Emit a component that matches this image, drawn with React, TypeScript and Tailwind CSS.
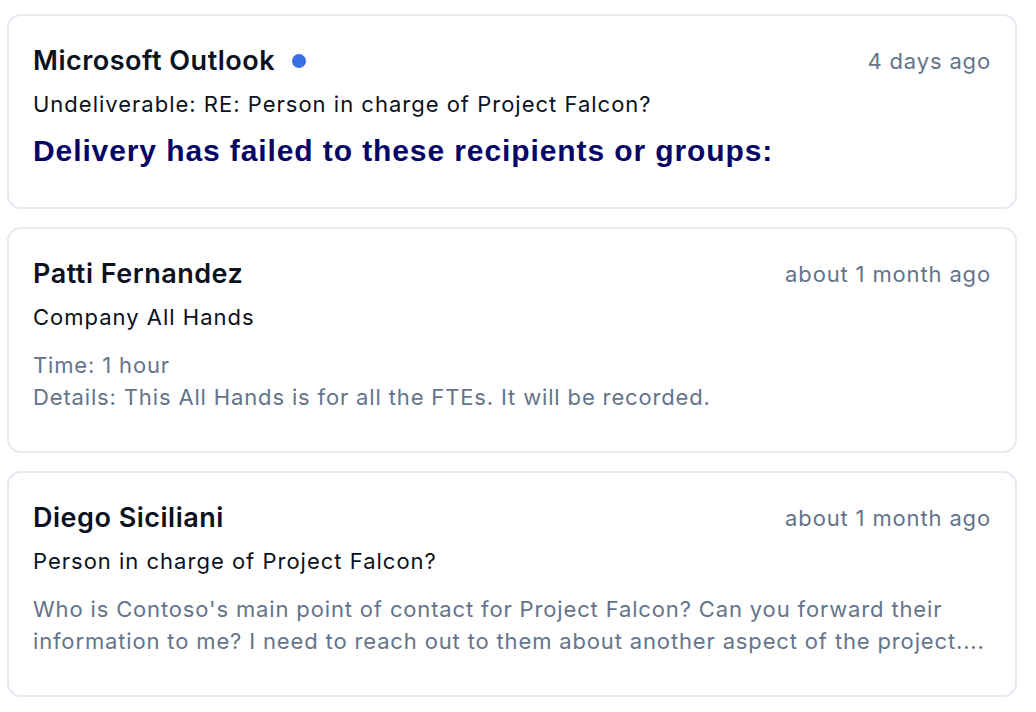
type Mail = {
    from: string;
    unread?: boolean;
    when: string;
    subject: string;
    body: React.ReactNode;
};

const mails: Mail[] = [
    {
        from: "Microsoft Outlook",
        unread: true,
        when: "4 days ago",
        subject: "Undeliverable: RE: Person in charge of Project Falcon?",
        body: (
            <p className="mt-[14px] font-['Liberation_Sans',Arial,sans-serif] text-[30px] leading-[36px] font-bold tracking-[0.9px] text-[#060666]">
                Delivery has failed to these recipients or groups:
            </p>
        ),
    },
    {
        from: "Patti Fernandez",
        when: "about 1 month ago",
        subject: "Company All Hands",
        body: (
            <div className="mt-[17px] text-[22px] leading-[32px] tracking-[0.85px] text-[#64748b]">
                <p>Time: 1 hour</p>
                <p>Details: This All Hands is for all the FTEs. It will be recorded.</p>
            </div>
        ),
    },
    {
        from: "Diego Siciliani",
        when: "about 1 month ago",
        subject: "Person in charge of Project Falcon?",
        body: (
            <p className="mt-[17px] text-[22px] leading-[32px] tracking-[0.85px] text-[#64748b] line-clamp-2">
                Who is Contoso's main point of contact for Project Falcon? Can you forward their information to me? I
                need to reach out to them about another aspect of the project....
            </p>
        ),
    },
];

function MailCard({ mail }: { mail: Mail }) {
    return (
        <div className="rounded-[14px] border-2 border-[#e5e9f0] bg-white px-6 pt-[27px] pb-[38px]">
            <div className="flex items-center justify-between">
                <div className="flex items-center gap-[17px]">
                    <span className="text-[27px] leading-[36px] font-semibold tracking-[0.5px] text-[#0b1120]">
                        {mail.from}
                    </span>
                    {mail.unread && <span className="h-[14px] w-[14px] rounded-full bg-[#3a6fe8]"></span>}
                </div>
                <span className="text-[22px] leading-[36px] tracking-[0.85px] text-[#64748b]">{mail.when}</span>
            </div>
            <p className="mt-[10px] text-[22px] leading-[30px] tracking-[1px] text-[#0b1120]">{mail.subject}</p>
            {mail.body}
        </div>
    );
}

export default function App() {
    return (
        <div className="min-h-screen bg-white font-['Inter',sans-serif] pt-[14px] pl-[7px]">
            <div className="flex w-[1010px] flex-col gap-[18px]">
                {mails.map((m) => (
                    <MailCard key={m.from} mail={m} />
                ))}
            </div>
        </div>
    );
}
